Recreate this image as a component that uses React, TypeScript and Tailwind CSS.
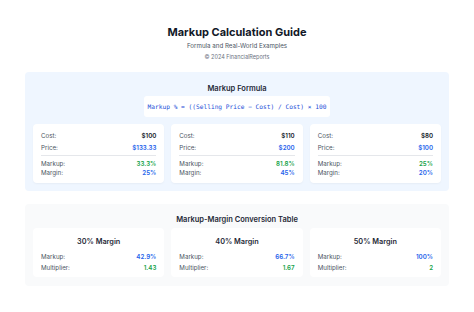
import React from "react";

const font = { fontFamily: 'Inter, "Liberation Sans", Arial, sans-serif' };

function Row({ label, value, color }: { label: string; value: string; color: string }) {
  return (
    <div className="flex items-center justify-between">
      <span className="text-[#4b5563]">{label}</span>
      <span className={`font-semibold ${color}`}>{value}</span>
    </div>
  );
}

const examples = [
  { cost: "$100", price: "$133.33", markup: "33.3%", margin: "25%" },
  { cost: "$110", price: "$200", markup: "81.8%", margin: "45%" },
  { cost: "$80", price: "$100", markup: "25%", margin: "20%" },
];

const conv = [
  { title: "30% Margin", markup: "42.9%", mult: "1.43" },
  { title: "40% Margin", markup: "66.7%", mult: "1.67" },
  { title: "50% Margin", markup: "100%", mult: "2" },
];

export default function App() {
  return (
    <div className="w-[474px] h-[312px] bg-white overflow-hidden" style={font}>
      <div className="px-[25px] pt-[24px]">
        <div className="text-center">
          <h1 className="text-[11px] leading-[16px] font-bold text-[#111827]">Markup Calculation Guide</h1>
          <p className="mt-[2px] text-[6.2px] leading-[8px] text-[#4b5563]">Formula and Real-World Examples</p>
          <p className="mt-[3.5px] text-[5.5px] leading-[7px] text-[#6b7280]">© 2024 FinancialReports</p>
        </div>

        <div className="mt-[11.5px] rounded-[4px] bg-[#eff6ff] px-[8px] pt-[10.5px] pb-[8px]">
          <h2 className="text-center text-[7.5px] leading-[11px] font-semibold text-[#1f2937]">Markup Formula</h2>
          <div className="mt-[2.5px] flex justify-center">
            <div className="rounded-[3px] bg-white px-[4px] py-[6px] text-[6.2px] leading-[9px] text-[#1d4ed8]" style={{ fontFamily: '"DejaVu Sans Mono", monospace' }}>
              Markup % = ((Selling Price − Cost) / Cost) × 100
            </div>
          </div>
          <div className="mt-[7px] grid grid-cols-3 gap-[7px]">
            {examples.map((e, i) => (
              <div key={i} className="rounded-[4px] bg-white px-[8px] pt-[6.5px] pb-[6.5px] text-[6.2px] leading-[9px] shadow-[0_1px_2px_rgba(0,0,0,0.04)]">
                <div className="flex flex-col gap-[3px] pb-[3.5px] border-b border-[#e5e7eb]">
                  <Row label="Cost:" value={e.cost} color="text-[#111827]" />
                  <Row label="Price:" value={e.price} color="text-[#2563eb]" />
                </div>
                <div className="pt-[2.5px] flex flex-col">
                  <Row label="Markup:" value={e.markup} color="text-[#16a34a]" />
                  <Row label="Margin:" value={e.margin} color="text-[#2563eb]" />
                </div>
              </div>
            ))}
          </div>
        </div>

        <div className="mt-[13px] rounded-[4px] bg-[#f9fafb] px-[8px] pt-[9.5px] pb-[9px]">
          <h2 className="text-center text-[7.5px] leading-[11px] font-semibold text-[#1f2937]">Markup-Margin Conversion Table</h2>
          <div className="mt-[3.5px] grid grid-cols-3 gap-[7px]">
            {conv.map((c, i) => (
              <div key={i} className="rounded-[4px] bg-white px-[8px] pt-[9px] pb-[5.5px] text-[6.2px] leading-[9px]">
                <div className="text-center text-[7.3px] leading-[10px] font-semibold text-[#1f2937]">{c.title}</div>
                <div className="mt-[4.5px] flex flex-col gap-[2px]">
                  <Row label="Markup:" value={c.markup} color="text-[#2563eb]" />
                  <Row label="Multiplier:" value={c.mult} color="text-[#16a34a]" />
                </div>
              </div>
            ))}
          </div>
        </div>
      </div>
    </div>
  );
}
